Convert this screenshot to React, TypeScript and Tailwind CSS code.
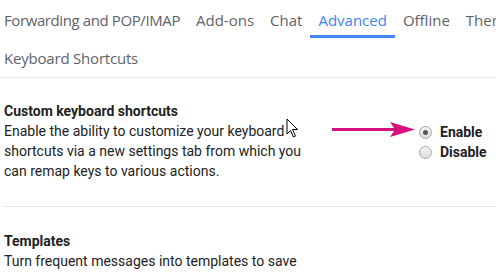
const tabs = ['Forwarding and POP/IMAP', 'Add-ons', 'Chat', 'Advanced', 'Offline', 'Themes'];

function Radio({ checked }: { checked?: boolean }) {
  return (
    <span className="w-[13px] h-[13px] rounded-full border border-[#a8a8a8] bg-gradient-to-b from-[#f4f4f4] to-[#dcdcdc] flex items-center justify-center shrink-0">
      {checked && <span className="w-[5px] h-[5px] rounded-full bg-[#555]" />}
    </span>
  );
}

export default function App() {
  return (
    <div className="w-[496px] h-[275px] overflow-hidden bg-white font-['Roboto',sans-serif] text-[#222] relative">
      {/* Tabs */}
      <div className="flex -ml-1 h-[38px] items-stretch whitespace-nowrap font-['Open_Sans',sans-serif] text-[15px] text-[#5f6368]">
        {tabs.map((t, i) => {
          const active = t === 'Advanced';
          return (
            <div
              key={t}
              className={
                active
                  ? 'px-2 pt-[9px] border-b-[3px] border-[#4285f4] text-[#4285f4]'
                  : i === 0
                    ? 'px-2 pt-[9px] tracking-[-0.4px]'
                    : 'px-2 pt-[9px]'
              }
            >
              {t}
            </div>
          );
        })}
      </div>

      <div className="pl-1 pt-[9px] h-[40px] border-b border-[#ebebeb] font-['Open_Sans',sans-serif] text-[15px] tracking-[-0.2px] text-[#5f6368]">
        Keyboard Shortcuts
      </div>

      {/* Custom keyboard shortcuts */}
      <div className="flex pt-[23px] pb-[25px] border-b border-[#e5e5e5] ml-1">
        <div className="w-[310px] text-[14px] leading-[20px]">
          <div className="font-bold">Custom keyboard shortcuts</div>
          <div>
            Enable the ability to customize your keyboard shortcuts via a new settings tab from which you can remap
            keys to various actions.
          </div>
        </div>
        <div className="flex flex-col gap-[7px] pt-[25px] pl-[105px] text-[14px] font-bold">
          <label className="flex items-center gap-[8px] leading-[13px]">
            <Radio checked />
            Enable
          </label>
          <label className="flex items-center gap-[8px] leading-[13px]">
            <Radio />
            Disable
          </label>
        </div>
      </div>

      <div className="pl-1 pt-[24px] text-[14px] leading-[20px] w-[310px]">
        <div className="font-bold">Templates</div>
        <div>Turn frequent messages into templates to save time on writing emails and replying to them.</div>
      </div>

      {/* arrow annotation */}
      <svg className="absolute left-[332px] top-[122px]" width="84" height="16" viewBox="0 0 84 16">
        <line x1="0" y1="7.5" x2="66" y2="7.5" stroke="#d6127f" strokeWidth="3" />
        <path d="M58 0 L83 7.5 L58 15 L63 7.5 Z" fill="#d6127f" />
      </svg>

      {/* mouse cursor */}
      <svg className="absolute left-[286px] top-[118px]" width="14" height="21" viewBox="0 0 14 21">
        <path d="M1 1 L1 16 L4.5 12.5 L7.5 19 L9.5 18 L6.5 11.5 L11.5 11.5 Z" fill="#fff" stroke="#000" strokeWidth="1" strokeLinejoin="round" />
      </svg>
    </div>
  );
}
